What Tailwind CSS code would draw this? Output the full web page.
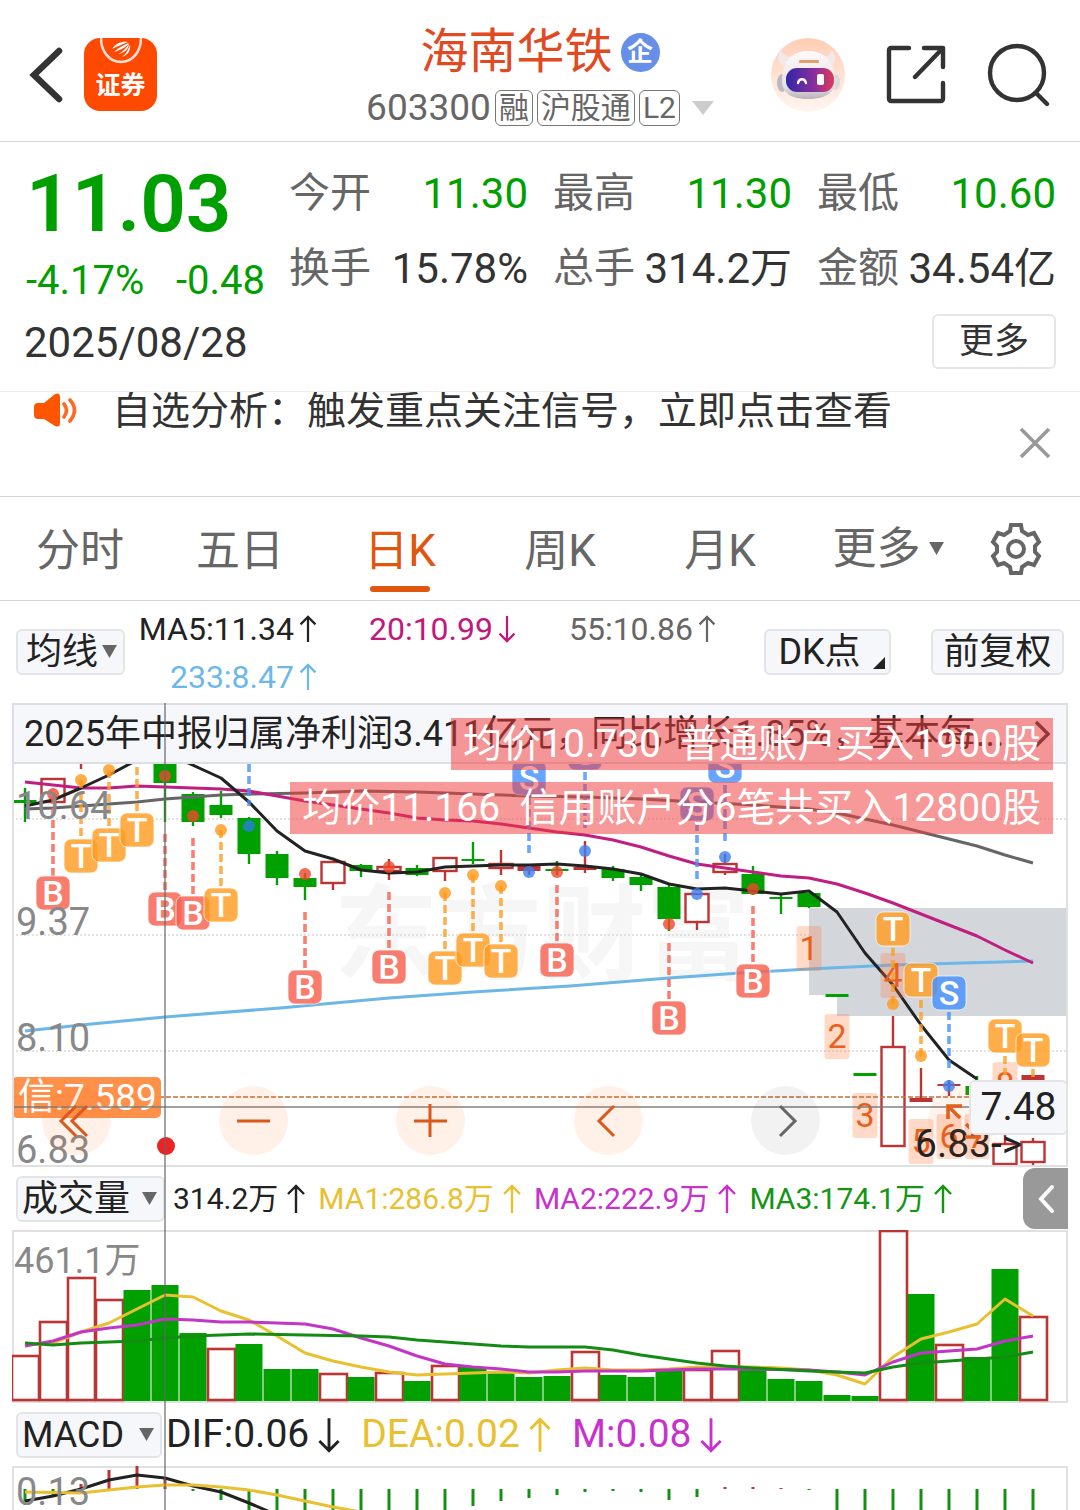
<!DOCTYPE html>
<html lang="zh-CN">
  <head>
    <meta charset="UTF-8" />
    <meta name="viewport" content="width=device-width, initial-scale=1.0" />
    <title>海南华铁 603300</title>
    <script src="https://cdn.jsdelivr.net/npm/@tailwindcss/browser@4"></script>
    <style>
      body {
        font-family: Roboto, "Noto Sans CJK SC", sans-serif;
      }
    </style>
  </head>
  <body class="bg-white text-[#333] overflow-x-hidden">
    <!-- Shared icons -->
    <svg class="hidden">
      <symbol id="up" viewBox="0 0 20 30">
        <path d="M10 29V2M2 10l8-8 8 8" fill="none" stroke="currentColor" stroke-width="2.4" />
      </symbol>
      <symbol id="down" viewBox="0 0 20 30">
        <path d="M10 1v27M2 20l8 8 8-8" fill="none" stroke="currentColor" stroke-width="2.4" />
      </symbol>
      <symbol id="caret" viewBox="0 0 16 14">
        <path d="M0 0h16L8 14z" fill="currentColor" />
      </symbol>
    </svg>

    <!-- Header -->
    <header class="relative flex h-[142px] items-center justify-between border-b border-[#d4d4d4] pl-7 pr-[30px]">
      <div class="flex items-center gap-5">
        <button aria-label="返回" class="mt-2">
          <svg class="h-[58px] w-9" viewBox="0 0 36 58" fill="none" stroke="#333" stroke-width="6.500" stroke-linecap="round">
            <path d="M31 5L6 29l25 24" />
          </svg>
        </button>
        <a href="#" aria-label="证券" class="relative mt-2 flex h-[73px] w-[73px] items-end justify-center rounded-2xl bg-[#ff4800] pb-2">
          <svg class="absolute left-4 top-0 h-[26px] w-[42px]" viewBox="0 0 42 26" fill="none">
            <path d="M1 0c0 13 8 24 20 24S41 13 41 0" stroke="#ffe3d6" stroke-width="2.5" />
            <path d="M12 11C16 5 22 3 28 4c-5 2-10 4-16 7zM14 14c5-5 10-7 15-9-2 4-8 7-15 9zM18 16c5-2 8-6 11-10 0 4-4 9-11 10zM22 19c4-3 6-7 8-12 1 5-2 10-8 12z" fill="#fff" />
          </svg>
          <span class="text-[25px] leading-[34px] font-bold text-white">证券</span>
        </a>
      </div>

      <div class="absolute inset-y-0 left-1/2 flex w-[360px] -translate-x-1/2 flex-col items-center pt-[22px]">
        <h1 class="flex items-center gap-2 text-[48px] leading-[60px] text-[#e04a22]">
          海南华铁
          <span class="flex h-[39px] w-[39px] items-center justify-center rounded-full bg-[#668fe8] text-[26px] leading-none font-bold text-white">企</span>
        </h1>
        <div class="mt-2 flex items-center gap-1 text-[30px] leading-[34px] text-[#666]">
          <span class="text-[37px]">603300</span>
          <span class="rounded-md border border-[#777] px-[3px]">融</span>
          <span class="rounded-md border border-[#777] px-[3px]">沪股通</span>
          <span class="rounded-md border border-[#777] px-[3px]">L2</span>
          <button aria-label="切换" class="ml-2 text-[#ccc]"><svg class="h-[14px] w-[22px]" viewBox="0 0 22 14"><path d="M0 0h22L11 14z" fill="currentColor" /></svg></button>
        </div>
      </div>

      <div class="mt-2 flex items-center gap-10">
        <button aria-label="智能助手">
          <svg class="h-[76px] w-[76px]" viewBox="0 0 76 76">
            <defs>
              <linearGradient id="halo" x1="0" y1="0" x2="0" y2="1">
                <stop offset="0" stop-color="#ffcdb4" />
                <stop offset="1" stop-color="#fff6f1" />
              </linearGradient>
              <linearGradient id="shell" x1="0" y1="0" x2="0" y2="1">
                <stop offset="0" stop-color="#fffaf8" />
                <stop offset="0.75" stop-color="#e6e0e6" />
                <stop offset="1" stop-color="#b9b2b8" />
              </linearGradient>
              <linearGradient id="visor" x1="0" y1="0" x2="1" y2="0">
                <stop offset="0" stop-color="#3026a8" />
                <stop offset="0.6" stop-color="#8a2f9c" />
                <stop offset="1" stop-color="#e03a58" />
              </linearGradient>
            </defs>
            <circle cx="38" cy="38" r="37" fill="url(#halo)" />
            <path d="M11 13c-5 7-3 14 4 16l9-9c-6 0-11-2-13-7zM62 13c5 7 4 14-2 17l-10-10c6 0 10-2 12-7z" fill="#f2e8e7" />
            <ellipse cx="12" cy="46" rx="5" ry="9" fill="#bdb9c0" />
            <ellipse cx="66" cy="45" rx="4" ry="8" fill="#dcd8dc" />
            <path d="M12 44C12 24 22 14 38 14s27 10 27 30c0 12-10 18-27 18S12 56 12 44z" fill="url(#shell)" />
            <rect x="29" y="23" width="20" height="3" rx="1" fill="#e0a070" />
            <rect x="16" y="31" width="48" height="24" rx="11" fill="url(#visor)" />
            <path d="M28 46c1-5 7-5 8 0" fill="none" stroke="#fff" stroke-width="2.4" stroke-linecap="round" />
            <rect x="47" y="37" width="7" height="11" rx="2" fill="#fff" />
          </svg>
        </button>
        <button aria-label="分享">
          <svg class="h-[60px] w-[60px]" viewBox="0 0 60 60" fill="none" stroke="#333" stroke-width="4.4" stroke-linecap="round" stroke-linejoin="round">
            <path d="M23 3H5a2 2 0 0 0-2 2v49a2 2 0 0 0 2 2h50a2 2 0 0 0 2-2V38M38 3h19v19M57 3L29 32" />
          </svg>
        </button>
        <button aria-label="搜索">
          <svg class="h-[64px] w-[64px]" viewBox="0 0 64 64" fill="none" stroke="#333" stroke-width="4.4" stroke-linecap="round">
            <circle cx="31" cy="30" r="27" />
            <path d="M50 50l11 11" />
          </svg>
        </button>
      </div>
    </header>

    <!-- Quote -->
    <section class="flex h-[249px] pl-6 pr-6">
      <div class="w-[265px] shrink-0 whitespace-nowrap pt-5 text-[#009f00]">
        <p class="pl-[2px] text-[80px] leading-[84px] font-semibold">11.03</p>
        <p class="mt-2 flex justify-between pr-6 pl-[2px] text-[40px] leading-[54px]"><span>-4.17%</span><span>-0.48</span></p>
        <p class="mt-2 text-[42px] leading-[54px] text-[#333]">2025/08/28</p>
      </div>
      <div class="flex flex-1 flex-col pt-[14px]">
        <dl class="grid grid-cols-3 gap-x-[25px] text-[42px] leading-[75px] whitespace-nowrap">
          <div class="flex justify-between"><dt class="text-[41px] text-[#666]">今开</dt><dd class="text-[#009f00]">11.30</dd></div>
          <div class="flex justify-between"><dt class="text-[41px] text-[#666]">最高</dt><dd class="text-[#009f00]">11.30</dd></div>
          <div class="flex justify-between"><dt class="text-[41px] text-[#666]">最低</dt><dd class="text-[#009f00]">10.60</dd></div>
          <div class="flex justify-between"><dt class="text-[41px] text-[#666]">换手</dt><dd>15.78%</dd></div>
          <div class="flex justify-between"><dt class="text-[41px] text-[#666]">总手</dt><dd>314.2万</dd></div>
          <div class="flex justify-between"><dt class="text-[41px] text-[#666]">金额</dt><dd>34.54亿</dd></div>
        </dl>
        <button class="mt-2 h-[55px] w-[124px] self-end rounded-md border-2 border-[#e6e6e6] text-[35px] leading-[50px]">更多</button>
      </div>
    </section>

    <!-- Notice -->
    <section class="flex h-[106px] items-start justify-between overflow-hidden border-t border-b border-t-[#ededed] border-b-[#d4d4d4] pl-8 pr-7">
      <div class="flex items-start gap-[34px]">
        <svg class="h-9 w-[46px]" viewBox="0 0 46 36">
          <path d="M6 11h6L23 2q5-2 5 3v26q0 5-5 3L12 27H6q-4 0-4-4v-8q0-4 4-4z" fill="#ff5500" />
          <path d="M32 12q5 6 0 13M38 8q9 10 0 21" fill="none" stroke="#ff6a22" stroke-width="3.6" stroke-linecap="round" />
        </svg>
        <a href="#" class="text-[39px] leading-[38px]">自选分析：触发重点关注信号，立即点击查看</a>
      </div>
      <button aria-label="关闭" class="mt-[34px]">
        <svg class="h-[34px] w-[34px]" viewBox="0 0 34 34" stroke="#999" stroke-width="3.6"><path d="M3 3l28 28M31 3L3 31" /></svg>
      </button>
    </section>

    <!-- Period tabs -->
    <nav class="flex h-[104px] items-stretch border-b border-[#d4d4d4] pr-6 text-[44px] leading-[108px] text-[#666]">
      <button class="flex-[20]">分时</button>
      <button class="flex-[20]">五日</button>
      <button class="relative flex-[20] text-[#e0560f]">日K<span class="absolute bottom-2 left-1/2 h-[6px] w-[60px] -translate-x-1/2 rounded-full bg-[#e0560f]"></span></button>
      <button class="flex-[20]">周K</button>
      <button class="flex-[20]">月K</button>
      <button class="flex flex-[22] items-center justify-center gap-2">更多<svg class="h-[13px] w-[15px]"><use href="#caret" /></svg></button>
      <button aria-label="设置" class="flex flex-[10] items-center justify-center">
        <svg class="h-[52px] w-[52px]" viewBox="0 0 52 52" fill="none" stroke="#666" stroke-width="4">
          <path d="M21 2h10l1 6 6 4 6-2 5 9-4 4v6l4 4-5 9-6-2-6 4-1 6H21l-1-6-6-4-6 2-5-9 4-4v-6l-4-4 5-9 6 2 6-4z" />
          <circle cx="26" cy="26" r="8" />
        </svg>
      </button>
    </nav>

    <!-- Moving average bar -->
    <section class="flex h-[102px] items-start justify-between pl-4 pr-4">
      <div class="flex items-start">
        <label class="relative mt-7 block h-[46px] w-[109px]">
          <select aria-label="指标" class="block h-full w-full appearance-none rounded-md border-2 border-[#e2e4e8] bg-[#f6f7fa] pl-2 text-[36px] leading-[40px] text-[#222]"><option>均线</option></select>
          <svg class="pointer-events-none absolute top-4 right-2 h-[13px] w-[15px] text-[#666]"><use href="#caret" /></svg>
        </label>
        <div class="grid grid-cols-[193px_199px_200px] gap-y-2 pt-2 text-[32px] leading-10 whitespace-nowrap">
          <span class="flex items-center justify-end gap-1 text-[#222]">MA5:11.34<svg class="h-7 w-5"><use href="#up" /></svg></span>
          <span class="flex items-center justify-end gap-1 text-[#c0187c]">20:10.99<svg class="h-7 w-5"><use href="#down" /></svg></span>
          <span class="flex items-center justify-end gap-1 text-[#666]">55:10.86<svg class="h-7 w-5"><use href="#up" /></svg></span>
          <span class="flex items-center justify-end gap-1 text-[#6db8ea]">233:8.47<svg class="h-7 w-5"><use href="#up" /></svg></span>
        </div>
      </div>
      <div class="mt-7 flex gap-10 text-[36px] leading-[42px] text-[#222]">
        <button class="relative h-[46px] w-[127px] rounded-md border-2 border-[#e2e4e8] bg-[#f6f7fa] pr-4">DK点<svg class="absolute right-1 bottom-1 h-3 w-3" viewBox="0 0 12 12"><path d="M12 0v12H0z" fill="#222" /></svg></button>
        <button class="h-[46px] w-[133px] rounded-md border-2 border-[#e2e4e8] bg-[#f6f7fa]">前复权</button>
      </div>
    </section>

    <main class="relative mx-3">
      <!-- K line -->
      <section class="relative">
        <a href="#" class="flex h-[61px] items-center justify-between border-2 border-[#dcdee2] bg-[#f6f7fa] pl-[10px] pr-4 text-[36px] leading-[56px] whitespace-nowrap text-[#222]">
          <span>2025年中报归属净利润3.411亿元，同比增长1.85%，基本每...</span>
          <svg class="h-7 w-4" viewBox="0 0 16 28" fill="none" stroke="#333" stroke-width="3.4"><path d="M2 2l12 12L2 26" /></svg>
        </a>
        <svg id="kline" class="block w-full" viewBox="12 764 1056 403"></svg>

        <!-- Trade tooltips -->
        <div class="absolute top-[15px] right-[15px] flex flex-col items-end gap-3 text-[39px] leading-[52px] whitespace-pre text-white">
          <p class="bg-[#f23c3c]/52 px-3">均价10.730  普通账户买入1900股</p>
          <p class="bg-[#f23c3c]/52 px-3">均价11.166  信用账户分6笔共买入12800股</p>
        </div>

        <!-- Chart controls -->
        <div class="absolute right-[71px] bottom-3 left-[30px] flex justify-between">
          <button aria-label="最左" class="h-[69px] w-[69px] rounded-full bg-[#ff6a1c]/10">
            <svg viewBox="0 0 69 69" fill="none" stroke="#d9581a" stroke-width="3"><path d="M34 20L19 35l15 15M45 20L30 35l15 15" /></svg>
          </button>
          <button aria-label="缩小" class="h-[69px] w-[69px] rounded-full bg-[#ff6a1c]/10">
            <svg viewBox="0 0 69 69" fill="none" stroke="#d9581a" stroke-width="3"><path d="M18 35h33" /></svg>
          </button>
          <button aria-label="放大" class="h-[69px] w-[69px] rounded-full bg-[#ff6a1c]/10">
            <svg viewBox="0 0 69 69" fill="none" stroke="#d9581a" stroke-width="3"><path d="M18 35h33M34 18v33" /></svg>
          </button>
          <button aria-label="左移" class="h-[69px] w-[69px] rounded-full bg-[#ff6a1c]/10">
            <svg viewBox="0 0 69 69" fill="none" stroke="#d9581a" stroke-width="3"><path d="M40 20L25 35l15 15" /></svg>
          </button>
          <button aria-label="右移" class="h-[69px] w-[69px] rounded-full bg-black/5">
            <svg viewBox="0 0 69 69" fill="none" stroke="#666" stroke-width="3"><path d="M29 20l15 15-15 15" /></svg>
          </button>
          <button aria-label="全屏" class="h-[69px] w-[69px] rounded-full bg-[#ff6a1c]/8">
            <svg viewBox="0 0 69 69" fill="none" stroke="#e0601c" stroke-width="3.6"><path d="M32 32L20 20M20 33V20h14M38 38l13 13M51 38v13H37" /></svg>
          </button>
        </div>
        <output class="absolute right-0 bottom-8 flex h-[55px] w-[99px] items-center justify-center rounded-md border-2 border-[#e2e4e8] bg-[#f6f7fa] text-[39px] text-[#222]">7.48</output>
      </section>

      <!-- Volume -->
      <section>
        <div class="flex h-[63px] items-center justify-between">
          <div class="flex items-center gap-3 text-[30px] whitespace-nowrap">
            <div class="flex items-center gap-2">
              <label class="relative ml-1 block h-[46px] w-[149px]">
                <select aria-label="副图一" class="block h-full w-full appearance-none rounded-md border-2 border-[#e2e4e8] bg-[#f6f7fa] pl-1 text-[36px] leading-[40px] text-[#222]"><option>成交量</option></select>
                <svg class="pointer-events-none absolute top-4 right-2 h-[13px] w-[15px] text-[#666]"><use href="#caret" /></svg>
              </label>
              <span class="flex items-center gap-2 text-[#222]">314.2万<svg class="h-8 w-5"><use href="#up" /></svg></span>
            </div>
            <span class="flex items-center gap-2 text-[#e8c030]">MA1:286.8万<svg class="h-8 w-5"><use href="#up" /></svg></span>
            <span class="flex items-center gap-2 text-[#c832cc]">MA2:222.9万<svg class="h-8 w-5"><use href="#up" /></svg></span>
            <span class="flex items-center gap-2 text-[#149614]">MA3:174.1万<svg class="h-8 w-5"><use href="#up" /></svg></span>
          </div>
          <button aria-label="展开" class="flex h-[61px] w-[45px] shrink-0 items-center justify-center rounded-l-xl bg-[#999]">
            <svg class="h-8 w-5" viewBox="0 0 20 32" fill="none" stroke="#fff" stroke-width="4" stroke-linecap="round"><path d="M16 4L5 16l11 12" /></svg>
          </button>
        </div>
        <svg id="volume" class="block w-full" viewBox="12 1230 1056 173"></svg>
      </section>

      <!-- MACD -->
      <section>
        <div class="flex h-[63px] items-center gap-5 text-[39px] whitespace-nowrap">
          <div class="flex items-center gap-1">
            <label class="relative ml-1 block h-[46px] w-[146px]">
              <select aria-label="副图二" class="block h-full w-full appearance-none rounded-md border-2 border-[#e2e4e8] bg-[#f6f7fa] pl-1 text-[36px] leading-[40px] text-[#222]"><option>MACD</option></select>
              <svg class="pointer-events-none absolute top-4 right-2 h-[13px] w-[15px] text-[#666]"><use href="#caret" /></svg>
            </label>
            <span class="flex items-center gap-2 text-[#222]">DIF:0.06<svg class="h-9 w-6"><use href="#down" /></svg></span>
          </div>
          <span class="flex items-center gap-2 text-[#e8c030]">DEA:0.02<svg class="h-9 w-6"><use href="#up" /></svg></span>
          <span class="flex items-center gap-2 text-[#c832cc]">M:0.08<svg class="h-9 w-6"><use href="#down" /></svg></span>
        </div>
        <svg id="macd" class="block w-full" viewBox="12 1466 1056 44"></svg>
      </section>

      <!-- Crosshair -->
      <div class="pointer-events-none absolute inset-y-0 left-[152px] w-[2px] bg-[#666]/60"></div>
    </main>

    <script>
      const GREEN = "#00a000";
      const RED = "#bc3434";
      const X = (i) => 25 + 28 * i;

      const line = (points, color, width = 3) =>
        `<polyline points="${points}" fill="none" stroke="${color}" stroke-width="${width}" stroke-linejoin="round"/>`;
      const seg = (x1, y1, x2, y2, color, width, extra = "") =>
        `<line x1="${x1}" y1="${y1}" x2="${x2}" y2="${y2}" stroke="${color}" stroke-width="${width}" ${extra}/>`;
      const label = (x, y, text, size, color, extra = "") =>
        `<text x="${x}" y="${y}" font-size="${size}" fill="${color}" ${extra}>${text}</text>`;

      // index, type (g filled, r hollow, s solid red), top, bottom, high, low
      const candles = [
        [0, "g", 800, 803, 788, 822], [1, "r", 779, 802, 779, 802], [2, "s", 740, 760, 740, 769],
        [5, "g", 750, 783, 750, 822], [6, "g", 794, 822, 792, 826], [7, "g", 805, 815, 791, 818],
        [8, "g", 818, 854, 817, 864], [9, "g", 854, 878, 851, 885], [10, "g", 878, 887, 873, 900],
        [11, "r", 862, 883, 862, 890], [12, "g", 865, 871, 864, 877], [13, "r", 867, 871, 859, 880],
        [14, "g", 868, 875, 865, 876], [15, "r", 858, 871, 858, 881], [16, "g", 859, 861, 842, 864],
        [17, "r", 864, 868, 850, 875], [18, "s", 866, 871, 866, 875], [19, "g", 869, 871, 861, 875],
        [20, "s", 867, 870, 841, 873], [21, "g", 869, 878, 866, 881], [22, "g", 877, 885, 873, 891],
        [23, "g", 887, 919, 885, 931], [24, "r", 894, 922, 894, 930], [25, "r", 864, 872, 854, 875],
        [26, "g", 874, 894, 866, 895], [27, "g", 897, 899, 893, 914], [28, "g", 893, 907, 893, 908],
        [29, "g", 994, 997, 994, 997], [30, "g", 1073, 1076, 1073, 1076], [31, "r", 1047, 1146, 1016, 1146],
        [32, "s", 1098, 1102, 1068, 1102], [33, "s", 1084, 1086, 1080, 1096], [34, "g", 1086, 1095, 1076, 1095],
        [35, "r", 1144, 1164, 1135, 1164], [36, "s", 1075, 1080, 1075, 1080], [36, "r", 1142, 1162, 1138, 1167],
      ];

      // letter, index, badge centre, dashed line from/to, dot
      const marks = [
        ["B", 1, 893, 796, 876, 794], ["T", 2, 856, 780, 839, 780], ["T", 3, 845, 770, 828, 770],
        ["T", 4, 830, 767, 813, null], ["B", 5, 909, 834, 892, 776], ["B", 6, 913, 838, 896, 816],
        ["T", 7, 905, 830, 888, 830], ["", 8, 0, 764, 806, 826], ["B", 10, 987, 912, 970, 874],
        ["B", 13, 967, 892, 950, 867], ["T", 15, 968, 893, 951, 893], ["T", 16, 950, 875, 933, 875],
        ["T", 17, 961, 886, 944, 886], ["S", 18, 778, 797, 853, 872], ["B", 19, 960, 885, 943, 872],
        ["S", 20, 753, 772, 828, 851], ["B", 23, 1018, 943, 1001, 924], ["S", 24, 804, 823, 880, 894],
        ["S", 25, 766, 785, 842, 857], ["B", 26, 981, 906, 964, 889], ["T", 31, 929, 948, 1004, 1004],
        ["T", 32, 980, 1000, 1056, 1056], ["S", 33, 993, 1012, 1069, 1086], ["T", 35, 1036, 1056, 1075, null],
        ["T", 36, 1050, 1069, 1078, null],
      ];
      const markColor = { B: "#f8604e", T: "#ff9c22", S: "#4690fc", "": "#4690fc" };
      const dotColor = { B: "#f0482c", T: "#ff9818", S: "#3c80f0", "": "#2480e0" };
      const counts = [[1, 28, 948], [2, 29, 1036], [3, 30, 1115], [4, 31, 975], [5, 32, 1141], [6, 33, 1136], [7, 34, 1136], [8, 35, 1084]];

      function drawKline() {
        let s = label(334, 972, "东方财富", 104, "#f6f6f6", 'font-weight="700"');
        [819, 935, 1051].forEach((y) => (s += seg(12, y, 1068, y, "#dadada", 1.5, 'stroke-dasharray="2 2"')));
        s += `<path d="M809 908H1068V1016H837V995H809z" fill="#d3d6db"/>`;
        candles.forEach(([i, type, top, bottom, high, low]) => {
          const color = type === "g" ? GREEN : RED;
          s += seg(X(i), high, X(i), top, color, 2.4) + seg(X(i), bottom, X(i), low, color, 2.4);
          s += type === "r"
            ? `<rect x="${X(i) - 11.5}" y="${top}" width="23" height="${bottom - top}" fill="#fff" stroke="${color}" stroke-width="2.4"/>`
            : `<rect x="${X(i) - 11.5}" y="${top}" width="23" height="${bottom - top}" fill="${color}"/>`;
        });
        s += line("25,809 53,808 81,806 109,804 137,802 165,799 193,797 221,795 249,794 305,793 361,791 417,792 473,794 529,796 585,797 641,799 697,802 753,805 809,809 837,813 865,819 893,825 921,832 949,839 977,846 1005,855 1033,863", "#666");
        s += line("25,1031 81,1025 165,1017 280,1008 389,998 473,992 570,986 669,978 740,973 809,969 893,965 963,963 1033,961", "#6db6e8");
        s += line("25,782 53,785 81,788 109,788 137,786 165,787 193,788 221,789 249,791 277,796 305,801 333,805 361,809 389,813 417,818 445,820 473,821 501,824 529,828 557,832 585,835 613,840 641,847 669,856 697,864 725,868 753,872 781,876 809,878 837,884 865,893 893,903 921,914 949,925 977,936 1005,950 1033,963", "#c01e80");
        s += line("25,806 53,800 81,788 109,775 137,760 165,752 188,763 221,778 249,802 277,831 305,851 333,859 361,870 389,873 417,872 445,867 473,866 501,865 529,865 557,864 585,866 613,869 641,874 669,884 697,889 725,888 753,891 781,894 809,891 837,912 865,953 893,985 921,1025 949,1060 977,1079", "#222");

        counts.forEach(([n, i, y]) => {
          s += `<rect x="${X(i) - 12.5}" y="${y - 22}" width="25" height="45" rx="3" fill="#ff7a3c" fill-opacity=".28"/>`;
          s += label(X(i), y + 12, n, 34, "#e8601c", 'text-anchor="middle"');
        });
        marks.forEach(([letter, i, y, from, to, dot]) => {
          s += seg(X(i), from, X(i), to, markColor[letter], 3.6, 'stroke-dasharray="8 4" stroke-opacity=".8"');
          if (dot) s += `<circle cx="${X(i)}" cy="${dot}" r="6" fill="${dotColor[letter]}" fill-opacity=".8"/>`;
          if (letter) {
            s += `<rect x="${X(i) - 17}" y="${y - 17}" width="34" height="34" rx="7" fill="${markColor[letter]}" fill-opacity=".82" stroke="#fff" stroke-opacity=".7"/>`;
            s += label(X(i), y + 12, letter, 34, "#fff", 'text-anchor="middle" font-weight="500"');
          }
        });

        [["10.64", 819], ["9.37", 935], ["8.10", 1051], ["6.83", 1163]].forEach(([t, y]) => (s += label(16, y, t, 38, "#888")));
        s += seg(12, 1097, 970, 1097, "#c07848", 2, 'stroke-dasharray="5 2" stroke-opacity=".8"');
        s += `<rect x="12" y="1077" width="149" height="41" rx="5" fill="#ff8a40" fill-opacity=".94"/>`;
        s += label(18, 1110, "信:7.589", 37, "#fff");
        s += seg(12, 1107, 970, 1107, "#777", 2, 'stroke-opacity=".7"');
        s += label(915, 1157, "6.83-&gt;", 39, "#222");
        s += `<path d="M13 764V1166H1067V764" fill="none" stroke="#e0e0e0" stroke-width="2"/>`;
        s += `<circle cx="166" cy="1146" r="9" fill="#ee2424"/>`;
        document.getElementById("kline").innerHTML = s;
      }

      // bar tops from left to right; r marks a rising day
      const volumes = ["r1356", "r1322", "r1278", "r1300", "g1290", "g1285", "g1333", "r1349", "g1344", "g1369", "g1369", "r1374", "g1377", "r1373", "g1381", "r1366", "g1367", "g1373", "g1377", "g1376", "r1352", "g1375", "g1377", "g1368", "r1370", "r1351", "g1370", "g1379", "g1381", "g1395", "g1396", "r1231", "g1294", "r1345", "g1357", "g1269", "r1317"];

      function drawVolume() {
        let s = `<rect x="13" y="1231" width="1054" height="171" fill="none" stroke="#e0e0e0" stroke-width="2"/>`;
        volumes.forEach((v, i) => {
          const y = Number(v.slice(1));
          s += v[0] === "g"
            ? `<rect x="${X(i) - 13.5}" y="${y}" width="27" height="${1401 - y}" fill="${GREEN}"/>`
            : `<rect x="${X(i) - 13}" y="${y}" width="27" height="${1400 - y}" fill="#fff" stroke="${RED}" stroke-width="2.6"/>`;
        });
        s += line("25,1345 53,1343 81,1332 109,1323 137,1309 165,1295 193,1297 221,1311 249,1320 277,1336 305,1353 333,1361 361,1367 389,1372 417,1375 445,1374 473,1373 501,1372 529,1373 557,1370 585,1368 613,1370 641,1370 669,1369 697,1367 725,1367 753,1367 781,1368 809,1370 837,1375 865,1384 893,1357 921,1339 949,1332 977,1324 1005,1299 1033,1316", "#e8c030");
        s += line("25,1346 53,1341 81,1332 109,1328 137,1325 165,1319 193,1320 221,1322 249,1322 277,1323 305,1324 333,1329 361,1338 389,1346 417,1356 445,1364 473,1367 501,1369 529,1372 557,1372 585,1371 641,1371 697,1369 725,1369 753,1369 809,1370 837,1372 865,1375 893,1362 921,1353 949,1351 977,1349 1005,1341 1033,1336", "#c236c6");
        s += line("25,1343 53,1345 81,1343 109,1342 137,1341 165,1338 193,1336 249,1334 305,1335 361,1336 389,1337 417,1340 445,1342 473,1344 501,1346 529,1347 585,1347 613,1350 641,1355 669,1359 697,1363 725,1366 753,1368 809,1371 865,1373 893,1367 921,1363 949,1361 1005,1357 1033,1352", "#148c14");
        s += label(14, 1273, "461.1万", 36, "#888");
        document.getElementById("volume").innerHTML = s;
      }

      const macd = [1505, 1497, 1484, 1470, 1466, 1477, 1491, 1500, 1512, 1512, 1512, 1512, 1512, 1512, 1512, 1510, 1506, 1501, 1498, 1495, 1492, 1491, 1492, 1500, 1497, 1487, 1487, 1488, 1490, 1512, 1512, 1512, 1512, 1512, 1512, 1512, 1512];

      function drawMacd() {
        let s = `<path d="M13 1512V1467H1067V1512" fill="none" stroke="#e0e0e0" stroke-width="2"/>`;
        macd.forEach((y, i) => (s += seg(X(i), 1489, X(i), y, y < 1489 ? RED : "#149014", 3)));
        s += line("25,1501 53,1496 81,1489 109,1480 137,1475 165,1478 193,1486 221,1492 249,1503 270,1512", "#222");
        s += line("25,1492 81,1493 109,1490 137,1487 165,1485 193,1485 221,1487 249,1490 277,1495 305,1501 333,1507 361,1512", "#e8c030");
        s += label(16, 1505, "0.13", 38, "#888");
        document.getElementById("macd").innerHTML = s;
      }

      drawKline();
      drawVolume();
      drawMacd();
    </script>
  </body>
</html>
